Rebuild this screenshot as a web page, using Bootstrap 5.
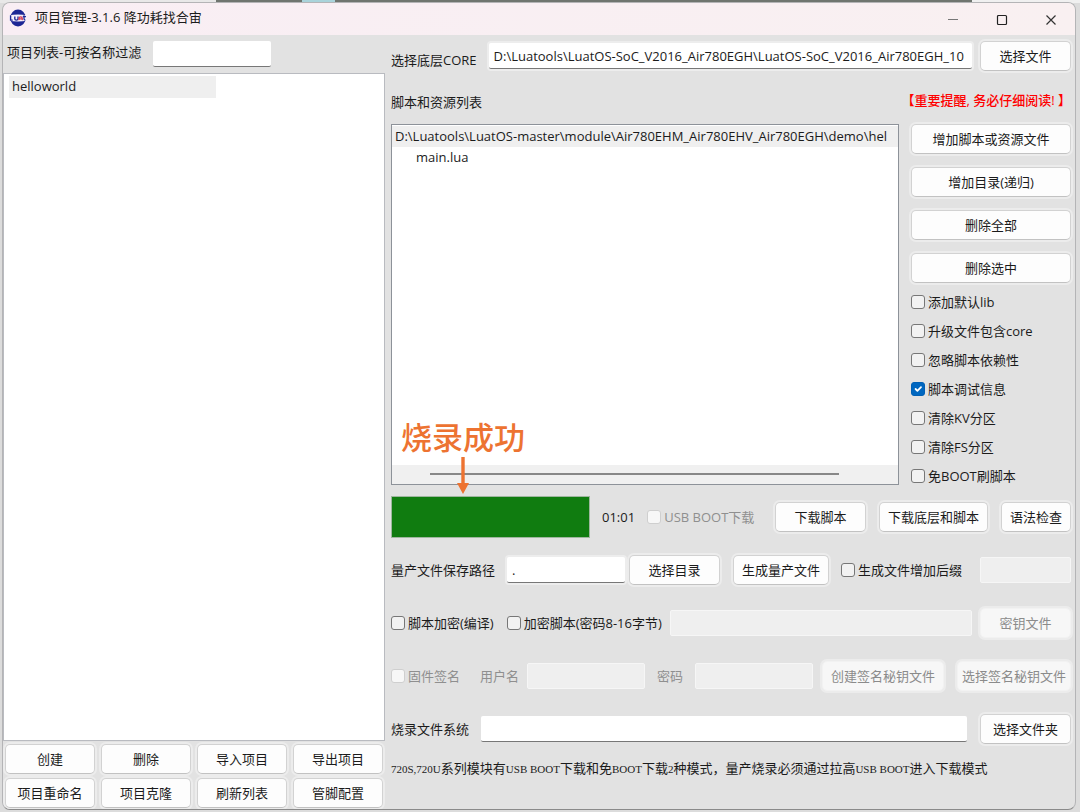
<!DOCTYPE html>
<html lang="zh-CN">
<head>
<meta charset="utf-8">
<meta name="viewport" content="width=device-width, initial-scale=1">
<title>项目管理</title>
<link rel="stylesheet" href="https://cdn.jsdelivr.net/npm/bootstrap@5.3.0/dist/css/bootstrap.min.css">
<style>
  body {
    font: 13px/20px "Open Sans", "Noto Sans CJK SC", sans-serif;
    color: #1b1b1b;
    background: linear-gradient(90deg, #e8e8e8 20%, #6f756f 20%, #6f756f 28%, #a9d3da 28%, #a9d3da 31%, #6f756f 31%, #6f756f 90%, #f0f0f0 90%) top / 100% 3px no-repeat, #dcdcdc;
    padding: 2px 4px 2px 2px;
  }
  .app-window { min-height: calc(100vh - 4px); background: #e2e2e2; border: 1px solid #b4b4b6; border-bottom-color: #8a8a8a; border-radius: 8px; overflow: hidden; }
  .title-bar { height: 32px; background: linear-gradient(90deg, #f9eef4, #f9f0f1); padding-left: 6px; }
  .app-logo { margin-top: 6px; flex: none; }
  .caption-btn { width: 49px; height: 30px; border: 0; background: none; padding: 0; }
  .panes { display: grid; grid-template-columns: minmax(0, 382fr) minmax(0, 680fr); column-gap: 6px; padding-right: 4px; }
  .push-btn { height: 30px; padding: 0 4px; font-size: 13px; line-height: 26px; color: #1b1b1b; background: #fdfdfd; border: 1px solid #d2d2d2; border-bottom-color: #c2c2c2; border-radius: 5px; box-shadow: 0 0 0 2px #ececec; white-space: nowrap; }
  .push-btn:hover { background: #e8f1fa; border-color: #0067c0; }
  .push-btn:disabled { color: #8b8b8b; background: #f7f7f7; border-color: #f2f2f2; opacity: 1; }
  .line-input { height: 26px; min-width: 0; padding: 0 5px; font-size: 13px; line-height: 24px; color: #1b1b1b; border: 0; border-bottom: 1px solid #777; border-radius: 2px; background: #fff; }
  .line-input:disabled { background: #efefef; border: 1px solid #f6f6f6; }
  .haloed { box-shadow: 0 0 0 2px #ededed; }
  .w-edit { width: 118px; }
  .w-push { width: 91px; }
  .gap-after { margin-right: 13px; }
  .tick { display: flex; align-items: center; gap: 3px; white-space: nowrap; }
  .tick .form-check-input { width: 14px; height: 14px; margin: 0; border: 1px solid #777; border-radius: 3px; background-color: #f2f2f2; flex: none; }
  .tick .form-check-input:checked { background-color: #0067c0; border-color: #0060b5; }
  .tick .form-check-input:disabled { border-color: #cfcfcf; background-color: #f7f7f7; opacity: 1; }
  .tick .form-check-input:disabled ~ label, .muted { color: #8f8f8f; opacity: 1; }
  .filter-row { padding: 6px 4px 6px; }
  .project-list { background: #fff; border: 1px solid #b9bbc0; padding: 2px 5px; }
  .project-item { display: block; width: 56%; height: 22px; padding: 0 3px; background: #efefef; color: inherit; text-decoration: none; }
  .project-actions { display: grid; grid-template-columns: repeat(4, 1fr); gap: 4px 6px; padding: 3px 2px 1px; }
  .core-row { padding-top: 6px; }
  .files-area { padding-top: 18px; }
  .files-title { padding: 3px 0 12px; }
  .file-box { height: 361px; background: #fff; border: 1px solid #8d9299; padding-top: 1px; }
  .file-row { height: 21px; white-space: nowrap; padding-left: 3px; }
  .file-row.current { background: #efefef; }
  .h-scroll { height: 19px; background: #f0f0f0; margin-top: auto; padding: 8px 59px 0 38px; }
  .h-thumb { height: 2px; background: #888; }
  .side-tools { width: 160px; margin-left: 12px; }
  .side-buttons { row-gap: 13px; }
  .side-ticks { grid-auto-rows: 29px; }
  .notice { color: #f00; text-decoration: none; white-space: nowrap; line-height: 22px; margin: 0 0 13px; align-self: flex-end; font-weight: 500; }
  .burn-row { margin-top: 6px; }
  .burn-progress { width: 199px; height: 42px; border: 1px solid #9fb79f; border-radius: 0; }
  .burn-progress .progress-bar { background: #107c10; }
  .callout-note { left: 9px; bottom: -10px; color: #ed7331; font-size: 31px; font-weight: 500; line-height: 40px; pointer-events: none; }
  .mono-note { font: 13px/20px "Noto Sans CJK SC", sans-serif; margin: 14px 0 0; }
  .mono-note span { font: 11px "Liberation Serif", serif; }
  .form-rows { display: flex; flex-direction: column; gap: 23px; margin-top: 17px; }
  .form-rows > div { height: 30px; display: flex; align-items: center; }
</style>
</head>
<body>
<div class="app-window d-flex flex-column">
  <header class="title-bar d-flex">
    <svg class="app-logo" width="18" height="18" viewBox="0 0 17 17" aria-hidden="true">
      <ellipse cx="8.5" cy="8.5" rx="7.3" ry="8" fill="#1c2795"/>
      <path d="M0 6Q8.500 4.500 17 6V11Q8.500 12.500 0 11Z" fill="#f6f0fa"/>
      <path d="M1.500 6v4.500h2M5.500 7v2.500q0 1 1.500 1t1.500-1V7" fill="none" stroke="#1c2795" stroke-width="1.300"/>
      <path d="M9.500 10.500q-.5-3 1.500-3t1.500 3M9.800 9.300h2.500" fill="none" stroke="#d43c55" stroke-width="1.200"/>
      <path d="M14.200 6v3.500q0 1 1.300 1M13 7.200h3" fill="none" stroke="#1c2795" stroke-width="1.200"/>
    </svg>
    <span class="me-auto ps-1 ms-1 mt-1">项目管理-3.1.6 降功耗找合宙</span>
    <button class="caption-btn" type="button" aria-label="最小化"><svg width="12" height="12" viewBox="0 0 12 12"><path d="M1 5.500h10" stroke="#777"/></svg></button>
    <button class="caption-btn" type="button" aria-label="最大化"><svg width="12" height="12" viewBox="0 0 12 12"><rect x="1.500" y="1.500" width="9" height="9" rx="1" fill="none" stroke="#222" stroke-width="1.200"/></svg></button>
    <button class="caption-btn" type="button" aria-label="关闭"><svg width="12" height="12" viewBox="0 0 12 12"><path d="M1.500 1.500l9 9M10.500 1.500l-9 9" stroke="#333" stroke-width="1.200"/></svg></button>
  </header>

  <main class="panes flex-grow-1">
    <section class="d-flex flex-column">
      <div class="filter-row d-flex align-items-center">
        <label for="filter" class="me-2 pe-1 pb-1">项目列表-可按名称过滤</label>
        <input id="filter" class="line-input w-edit" type="text">
      </div>
      <div class="project-list flex-grow-1">
        <a class="project-item" href="#">helloworld</a>
      </div>
      <div class="project-actions">
        <button class="btn push-btn" type="button">创建</button>
        <button class="btn push-btn" type="button">删除</button>
        <button class="btn push-btn" type="button">导入项目</button>
        <button class="btn push-btn" type="button">导出项目</button>
        <button class="btn push-btn" type="button">项目重命名</button>
        <button class="btn push-btn" type="button">项目克隆</button>
        <button class="btn push-btn" type="button">刷新列表</button>
        <button class="btn push-btn" type="button">管脚配置</button>
      </div>
    </section>

    <section>
      <div class="core-row d-flex align-items-center">
        <label for="core" class="text-nowrap pt-2 me-2 pe-1">选择底层CORE</label>
        <input id="core" class="line-input haloed flex-grow-1 me-2" type="text" value="D:\Luatools\LuatOS-SoC_V2016_Air780EGH\LuatOS-SoC_V2016_Air780EGH_10">
        <button class="btn push-btn w-push" type="button">选择文件</button>
      </div>

      <div class="files-area d-flex">
        <div class="flex-grow-1" style="min-width:0">
          <div class="files-title">脚本和资源列表</div>
          <div class="file-box position-relative d-flex flex-column">
            <div class="file-row current">D:\Luatools\LuatOS-master\module\Air780EHM_Air780EHV_Air780EGH\demo\hel</div>
            <div class="file-row ps-4">main.lua</div>
            <div class="h-scroll"><div class="h-thumb"></div></div>
            <div class="callout-note position-absolute d-flex flex-column align-items-center">
              <span>烧录成功</span>
              <svg width="12" height="37" viewBox="0 0 12 37" aria-hidden="true"><path d="M4.300 0h3.400v26H12L6 37 0 26h4.300z" fill="#ed7331"/></svg>
            </div>
          </div>
        </div>
        <div class="side-tools d-flex flex-column flex-shrink-0">
          <a class="notice" href="#">【重要提醒, 务必仔细阅读! 】</a>
          <div class="side-buttons d-grid">
            <button class="btn push-btn" type="button">增加脚本或资源文件</button>
            <button class="btn push-btn" type="button">增加目录(递归)</button>
            <button class="btn push-btn" type="button">删除全部</button>
            <button class="btn push-btn" type="button">删除选中</button>
          </div>
          <div class="side-ticks d-grid mt-1">
            <div class="tick"><input class="form-check-input" type="checkbox" id="c1"><label for="c1">添加默认lib</label></div>
            <div class="tick"><input class="form-check-input" type="checkbox" id="c2"><label for="c2">升级文件包含core</label></div>
            <div class="tick"><input class="form-check-input" type="checkbox" id="c3"><label for="c3">忽略脚本依赖性</label></div>
            <div class="tick"><input class="form-check-input" type="checkbox" id="c4" checked><label for="c4">脚本调试信息</label></div>
            <div class="tick"><input class="form-check-input" type="checkbox" id="c5"><label for="c5">清除KV分区</label></div>
            <div class="tick"><input class="form-check-input" type="checkbox" id="c6"><label for="c6">清除FS分区</label></div>
            <div class="tick"><input class="form-check-input" type="checkbox" id="c7"><label for="c7">免BOOT刷脚本</label></div>
          </div>
        </div>
      </div>

      <div class="burn-row d-flex align-items-center">
        <div class="progress burn-progress" role="progressbar" aria-label="烧录进度" aria-valuenow="100" aria-valuemin="0" aria-valuemax="100"><div class="progress-bar" style="width:100%"></div></div>
        <span class="mx-2 px-1">01:01</span>
        <div class="tick me-auto"><input class="form-check-input" type="checkbox" id="usb" disabled><label for="usb">USB BOOT下载</label></div>
        <button class="btn push-btn w-push gap-after" type="button">下载脚本</button>
        <button class="btn push-btn px-2 gap-after" type="button">下载底层和脚本</button>
        <button class="btn push-btn px-2" type="button">语法检查</button>
      </div>

      <div class="form-rows">
        <div>
          <label for="out" class="text-nowrap me-2 pe-1">量产文件保存路径</label>
          <input id="out" class="line-input haloed w-edit me-1" type="text" value=".">
          <button class="btn push-btn w-push gap-after" type="button">选择目录</button>
          <button class="btn push-btn px-2 me-2" type="button">生成量产文件</button>
          <div class="tick me-auto ps-1"><input class="form-check-input" type="checkbox" id="suf"><label for="suf">生成文件增加后缀</label></div>
          <input class="line-input w-push" type="text" aria-label="后缀" disabled>
        </div>
        <div>
          <div class="tick gap-after"><input class="form-check-input" type="checkbox" id="enc"><label for="enc">脚本加密(编译)</label></div>
          <div class="tick me-2"><input class="form-check-input" type="checkbox" id="pwd"><label for="pwd">加密脚本(密码8-16字节)</label></div>
          <input class="line-input flex-grow-1 me-2" type="text" aria-label="加密密码" disabled>
          <button class="btn push-btn w-push" type="button" disabled>密钥文件</button>
        </div>
        <div>
          <div class="tick me-3"><input class="form-check-input" type="checkbox" id="sig" disabled><label for="sig">固件签名</label></div>
          <label for="user" class="muted me-2 ps-1">用户名</label>
          <input id="user" class="line-input w-edit me-2" type="text" disabled>
          <label for="pass" class="muted mx-1">密码</label>
          <input id="pass" class="line-input w-edit me-auto ms-2" type="text" disabled>
          <button class="btn push-btn px-2 gap-after" type="button" disabled>创建签名秘钥文件</button>
          <button class="btn push-btn" type="button" disabled>选择签名秘钥文件</button>
        </div>
        <div>
          <label for="fs" class="text-nowrap me-2 pe-1">烧录文件系统</label>
          <input id="fs" class="line-input flex-grow-1 gap-after" type="text">
          <button class="btn push-btn w-push" type="button">选择文件夹</button>
        </div>
      </div>
      <p class="mono-note"><span>720S,720U</span>系列模块有<span>USB BOOT</span>下载和免<span>BOOT</span>下载<span>2</span>种模式，量产烧录必须通过拉高<span>USB BOOT</span>进入下载模式</p>
    </section>
  </main>
</div>
<script src="https://cdn.jsdelivr.net/npm/bootstrap@5.3.0/dist/js/bootstrap.bundle.min.js"></script>
</body>
</html>
